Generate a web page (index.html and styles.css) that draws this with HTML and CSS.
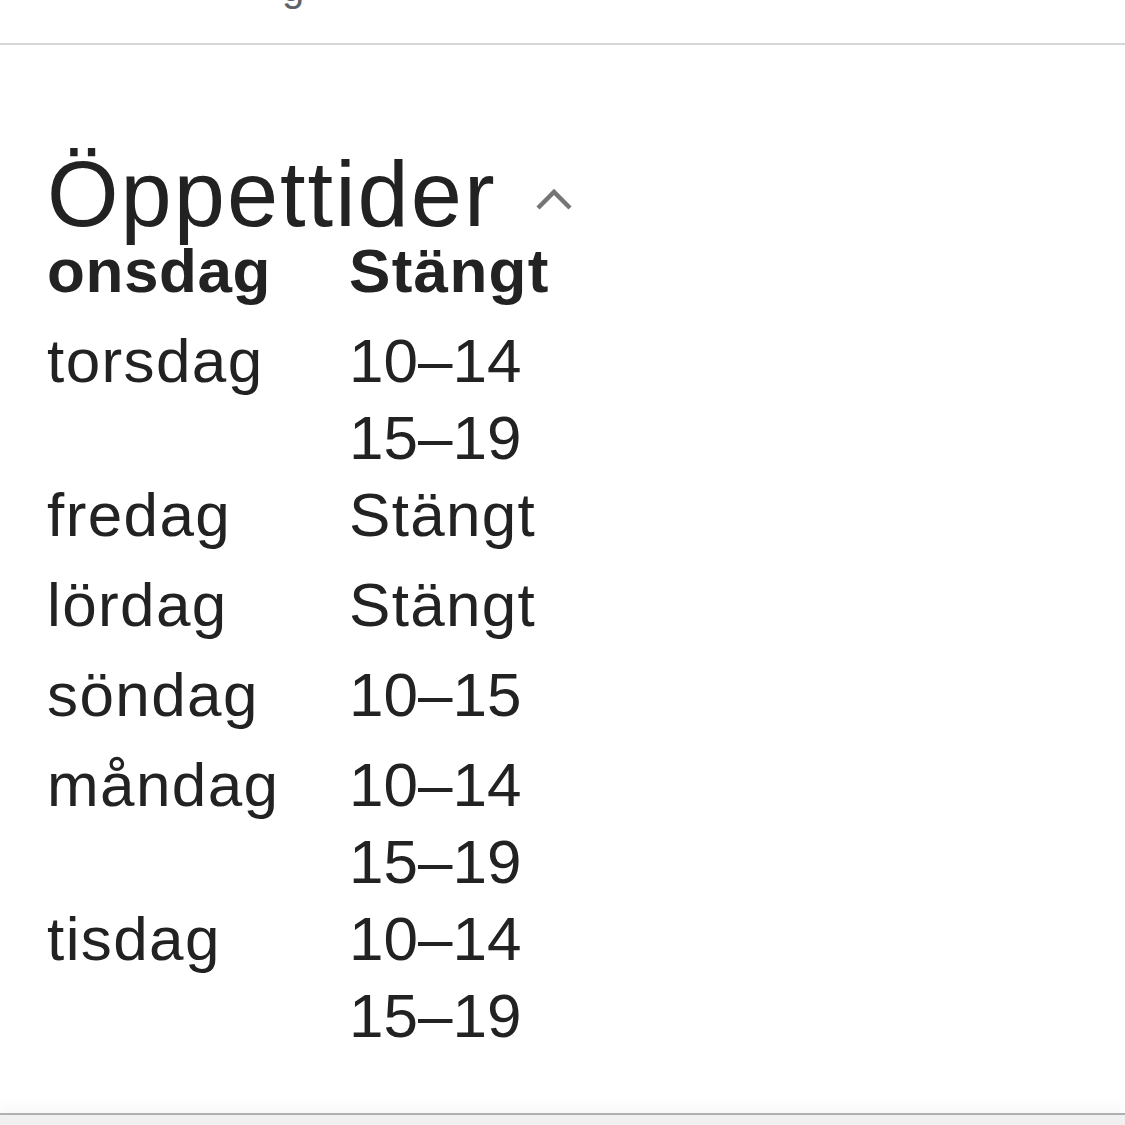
FILE: index.html
```html
<!DOCTYPE html>
<html lang="sv">
<head>
<meta charset="utf-8">
<title>Öppettider</title>
<link rel="stylesheet" href="styles.css">
</head>
<body>
<div class="topbar"><span class="peek">g</span></div>
<main class="content">
  <div class="title-row">
    <h2 class="title">Öppettider</h2>
    <svg class="chevron" width="40" height="24" viewBox="0 0 40 24"><polyline points="4,20 20,4 36,20" fill="none" stroke="#757575" stroke-width="4.5"/></svg>
  </div>
  <div class="hours">
    <div class="row today"><div class="day">onsdag</div><div class="times"><div class="closed">Stängt</div></div></div>
    <div class="row"><div class="day">torsdag</div><div class="times"><div>10–14</div><div>15–19</div></div></div>
    <div class="row"><div class="day">fredag</div><div class="times"><div class="closed">Stängt</div></div></div>
    <div class="row"><div class="day">lördag</div><div class="times"><div class="closed">Stängt</div></div></div>
    <div class="row"><div class="day">söndag</div><div class="times"><div>10–15</div></div></div>
    <div class="row"><div class="day">måndag</div><div class="times"><div>10–14</div><div>15–19</div></div></div>
    <div class="row"><div class="day">tisdag</div><div class="times"><div>10–14</div><div>15–19</div></div></div>
  </div>
</main>
<div class="bottom"></div>
</body>
</html>
```
FILE: styles.css
```css
html, body {
  margin: 0;
  padding: 0;
  background: #ffffff;
}
body {
  font-family: "Liberation Sans", Arial, Helvetica, sans-serif;
  color: #222222;
  height: 1125px;
  overflow: hidden;
  display: flex;
  flex-direction: column;
}
.topbar {
  height: 43px;
  border-bottom: 2px solid #d6d6d6;
  overflow: hidden;
  flex: none;
}
.peek {
  display: block;
  font-size: 40px;
  line-height: 40px;
  color: #5f6368;
  margin-top: -33px;
  margin-left: 282px;
}
.content {
  flex: 1;
  padding: 111px 0 0 47px;
}
.title-row {
  display: flex;
  align-items: flex-start;
}
.title {
  margin: 0;
  font-weight: 400;
  font-size: 92px;
  line-height: 76px;
  height: 76px;
  letter-spacing: 2px;
}
.chevron {
  margin-left: 37px;
  margin-top: 32px;
}
.hours {
  display: flex;
  flex-direction: column;
}
.row {
  display: flex;
  min-height: 90px;
  font-size: 62px;
  line-height: 77px;
}
.row.today {
  font-weight: 700;
}
.day {
  width: 302px;
  flex: none;
  letter-spacing: 1.4px;
}
.row.today .day {
  letter-spacing: 0.6px;
}
.times {
  display: flex;
  flex-direction: column;
}
.closed {
  letter-spacing: 1.3px;
}
.bottom {
  flex: none;
  height: 10px;
  border-top: 2px solid #b0b0b0;
  background: #f0f0f0;
  box-shadow: 0 -8px 12px rgba(0,0,0,0.03);
}
```
